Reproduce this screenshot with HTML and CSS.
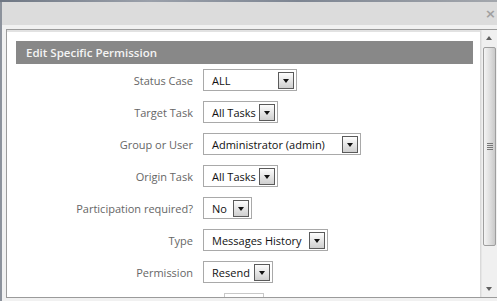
FILE: index.html
```html
<!DOCTYPE html>
<html lang="en">
<head>
  <meta charset="UTF-8" />
  <title>Edit Specific Permission</title>
  <link rel="stylesheet" href="styles.css">
</head>
<body>
  <div class="backdrop-strip"></div>

  <div class="dialog">
    <div class="dialog-titlebar">
      <span class="dialog-close">&times;</span>
    </div>

    <div class="dialog-body">
      <div class="frame">
        <div class="frame-page">
          <div class="section-head">Edit Specific Permission</div>

          <div class="perm-form">
            <label class="perm-label">Status Case</label>
            <div class="combo combo-status">
              <span class="combo-text">ALL</span>
              <span class="combo-btn"></span>
            </div>

            <label class="perm-label">Target Task</label>
            <div class="combo combo-task">
              <span class="combo-text">All Tasks</span>
              <span class="combo-btn"></span>
            </div>

            <label class="perm-label">Group or User</label>
            <div class="combo combo-user">
              <span class="combo-text">Administrator (admin)</span>
              <span class="combo-btn"></span>
            </div>

            <label class="perm-label">Origin Task</label>
            <div class="combo combo-task">
              <span class="combo-text">All Tasks</span>
              <span class="combo-btn"></span>
            </div>

            <label class="perm-label">Participation required?</label>
            <div class="combo combo-bool">
              <span class="combo-text">No</span>
              <span class="combo-btn"></span>
            </div>

            <label class="perm-label">Type</label>
            <div class="combo combo-type">
              <span class="combo-text">Messages History</span>
              <span class="combo-btn"></span>
            </div>

            <label class="perm-label">Permission</label>
            <div class="combo combo-perm">
              <span class="combo-text">Resend</span>
              <span class="combo-btn"></span>
            </div>

            <span></span>
            <div class="form-actions">
              <span class="btn-save"></span>
            </div>
          </div>
        </div>

        <!-- fake classic scrollbar -->
        <div class="scrollbar">
          <span class="scroll-arrow scroll-up"></span>
          <div class="scroll-track">
            <div class="scroll-thumb">
              <span class="grip"></span>
            </div>
          </div>
          <span class="scroll-arrow scroll-down"></span>
        </div>
      </div>
    </div>
  </div>
</body>
</html>
```

FILE: styles.css
```css
body {
  margin: 0;
  font-family: 'Open Sans', 'Liberation Sans', sans-serif;
  background: #8c929c;
  width: 497px;
  height: 301px;
  overflow: hidden;
}

.backdrop-strip {
  height: 2px;
  background: linear-gradient(90deg, #6f7784 0%, #9aa0aa 30%, #7d8592 60%, #a3a7ad 100%);
}

.dialog {
  margin-left: 2px;
  height: 299px;
  background: #f1f1f1;
  display: flex;
  flex-direction: column;
}

.dialog-titlebar {
  flex-shrink: 0;
  height: 23px;
  background: #dcdcdc;
  display: flex;
  align-items: center;
  justify-content: flex-end;
  padding-right: 1px;
}

.dialog-close {
  color: #a0a0a0;
  font-family: 'DejaVu Sans', sans-serif;
  font-size: 13px;
  font-weight: 700;
  line-height: 1;
}

.dialog-body {
  flex: 1;
  min-height: 0;
  padding: 4px 0 3px 4px;
  display: flex;
}

.frame {
  flex: 1;
  border: 1px solid #9b9b9b;
  border-right: none;
  background: #fff;
  display: flex;
  overflow: hidden;
}

.frame-page {
  flex: 1;
  border-top: 2px solid #e2e2e2;
  border-right: 1px solid #dadada;
  padding: 9px 7px 0 9px;
  overflow: hidden;
}

.section-head {
  height: 23px;
  line-height: 23px;
  background: #888888;
  color: #f4f4f4;
  font-size: 11.5px;
  font-weight: 600;
  padding-left: 10px;
}

.perm-form {
  display: grid;
  grid-template-columns: 177px auto;
  column-gap: 10px;
  row-gap: 10px;
  align-items: center;
  margin-top: 5px;
}

.perm-label {
  text-align: right;
  color: #666666;
  font-size: 11px;
}

.combo {
  height: 22px;
  box-sizing: border-box;
  border: 1px solid #a9a9a9;
  background: #fff;
  display: flex;
  align-items: center;
  justify-content: space-between;
  padding: 0 2px 0 8px;
}

.combo-text {
  color: #111;
  font-size: 11px;
  white-space: nowrap;
}

.combo-btn {
  width: 14px;
  height: 15px;
  border: 1px solid #5a5a5a;
  background: linear-gradient(#fdfdfd, #cfcfcf);
  position: relative;
}

.combo-btn::after {
  content: '';
  position: absolute;
  left: 3.5px;
  top: 6px;
  border-left: 3.5px solid transparent;
  border-right: 3.5px solid transparent;
  border-top: 4px solid #111;
}

.combo-status { width: 94px; }
.combo-task { width: 75px; }
.combo-user { width: 158px; }
.combo-bool { width: 49px; }
.combo-type { width: 125px; }
.combo-perm { width: 70px; }

.form-actions {
  padding-left: 21px;
}

.btn-save {
  display: block;
  width: 40px;
  height: 22px;
  box-sizing: border-box;
  border: 1px solid #c8c8c8;
  background: #fff;
}

.scrollbar {
  width: 15px;
  background: #f0f0f0;
  border-left: 1px solid #e6e6e6;
  display: flex;
  flex-direction: column;
  align-items: center;
}

.scroll-arrow {
  flex-shrink: 0;
  height: 16px;
  width: 15px;
  position: relative;
}

.scroll-arrow::after {
  content: '';
  position: absolute;
  left: 4px;
  border-left: 3.5px solid transparent;
  border-right: 3.5px solid transparent;
}

.scroll-up::after {
  top: 6px;
  border-bottom: 4px solid #606060;
}

.scroll-down::after {
  top: 6px;
  border-top: 4px solid #606060;
}

.scroll-track {
  flex: 1;
  min-height: 0;
  width: 15px;
  display: flex;
  flex-direction: column;
}

.scroll-thumb {
  margin: 1px 0 0 1px;
  width: 13px;
  height: 199px;
  box-sizing: border-box;
  border: 1px solid #9e9e9e;
  border-radius: 2px;
  background: linear-gradient(90deg, #f4f4f4, #dcdcdc 60%, #c9c9c9);
  display: flex;
  align-items: center;
  justify-content: center;
}

.grip {
  width: 6px;
  height: 7px;
  background: repeating-linear-gradient(#777 0 1px, transparent 1px 2px);
}
```
